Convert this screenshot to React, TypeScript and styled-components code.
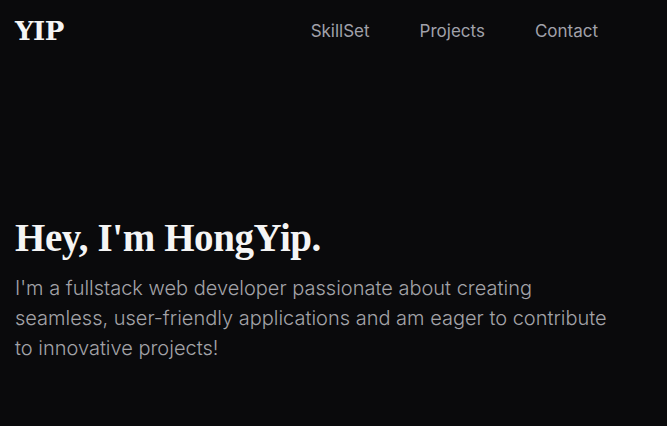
import React from "react";
import styled, { createGlobalStyle } from "styled-components";

const Global = createGlobalStyle`
  html, body { margin: 0; padding: 0; background: #0a0a0c; }
  body { font-family: Inter, "Noto Sans", sans-serif; }
`;

const Page = styled.div`
  width: 667px;
  height: 426px;
  background: #0a0a0c;
  display: flex;
  flex-direction: column;
  overflow: hidden;
`;

const Header = styled.header`
  display: flex;
  align-items: center;
  justify-content: space-between;
  height: 62px;
  padding: 0 69px 0 15px;
`;

const Logo = styled.div`
  font-family: "DejaVu Serif", "Liberation Serif", serif;
  font-weight: 700;
  font-size: 26px;
  color: #f5f5f5;
  letter-spacing: -0.5px;
`;

const Nav = styled.nav`
  display: flex;
  gap: 50px;
`;

const NavLink = styled.a`
  font-family: Inter, sans-serif;
  font-size: 17px;
  color: #a1a1aa;
  text-decoration: none;
`;

const Hero = styled.section`
  padding: 152px 15px 0 15px;
`;

const Title = styled.h1`
  margin: 0;
  font-family: "Liberation Serif", serif;
  font-weight: 700;
  font-size: 39px;
  letter-spacing: -0.4px;
  color: #f5f5f5;
  line-height: 48px;
`;

const Lead = styled.p`
  margin: 11px 0 0 0;
  max-width: 600px;
  font-family: Inter, sans-serif;
  font-weight: 300;
  font-size: 20px;
  line-height: 30px;
  color: #a3a3a8;
`;

export default function App() {
  return (
    <Page>
      <Global />
      <Header>
        <Logo>YIP</Logo>
        <Nav>
          <NavLink href="#">SkillSet</NavLink>
          <NavLink href="#">Projects</NavLink>
          <NavLink href="#">Contact</NavLink>
        </Nav>
      </Header>
      <Hero>
        <Title>Hey, I'm HongYip.</Title>
        <Lead>
          I'm a fullstack web developer passionate about creating seamless,
          user-friendly applications and am eager to contribute to innovative
          projects!
        </Lead>
      </Hero>
    </Page>
  );
}
